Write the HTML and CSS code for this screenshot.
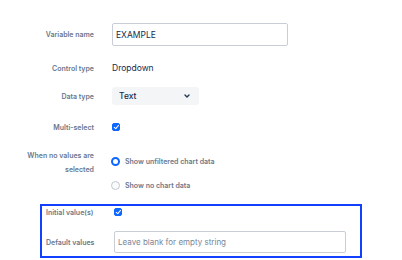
FILE: index.html
```html
<!DOCTYPE html>
<html lang="en">
<head>
  <meta charset="UTF-8">
  <meta name="viewport" content="width=device-width, initial-scale=1.0">
  <title>Variable settings</title>
  <link rel="stylesheet" href="styles.css">
</head>
<body>
  <form class="form">
    <div class="row row-name">
      <label class="label" for="name">Variable name</label>
      <input class="text-input name-input" id="name" type="text" value="EXAMPLE">
    </div>

    <div class="row row-control">
      <span class="label">Control type</span>
      <span class="value">Dropdown</span>
    </div>

    <div class="row row-data">
      <span class="label">Data type</span>
      <div class="select">
        <span>Text</span>
        <svg class="chevron" width="8" height="8" viewBox="0 0 8 8">
          <path d="M2 3 L4 5 L6 3" fill="none" stroke="#253858" stroke-width="1.4" stroke-linecap="round" stroke-linejoin="round"/>
        </svg>
      </div>
    </div>

    <div class="row row-multi">
      <span class="label">Multi-select</span>
      <span class="checkbox checked"></span>
    </div>

    <div class="row row-empty">
      <span class="label label-multi">When no values are<br>selected</span>
      <div class="radios">
        <div class="radio-item">
          <span class="radio selected"></span>
          <span class="radio-text">Show unfiltered chart data</span>
        </div>
        <div class="radio-item">
          <span class="radio"></span>
          <span class="radio-text">Show no chart data</span>
        </div>
      </div>
    </div>

    <div class="highlight">
      <div class="row row-initial">
        <span class="label">Initial value(s)</span>
        <span class="checkbox checked"></span>
      </div>
      <div class="row row-default">
        <span class="label">Default values</span>
        <input class="text-input default-input" type="text" placeholder="Leave blank for empty string">
      </div>
    </div>
  </form>
</body>
</html>
```

FILE: styles.css
```css
body {
  margin: 0;
  padding: 0;
  background: #fff;
  font-family: "Inter", "Liberation Sans", sans-serif;
  color: #172b4d;
}

.form {
  padding-top: 23px;
}

.row {
  display: flex;
  align-items: center;
}

.label {
  width: 80px;
  margin-left: 14px;
  margin-right: 18px;
  text-align: right;
  font-size: 7px;
  font-weight: 600;
  color: #6b778c;
  white-space: nowrap;
}

.row-name {
  height: 23px;
}

.text-input {
  box-sizing: border-box;
  border: 1.5px solid #c9ced6;
  border-radius: 2px;
  background: #fff;
  font-family: inherit;
  font-size: 8.5px;
  color: #172b4d;
  padding: 0 3px;
  outline: none;
}

.name-input {
  width: 176px;
  height: 23px;
}

.row-control {
  height: 22px;
  margin-top: 11px;
}

.value {
  font-size: 8.5px;
  color: #172b4d;
}

.row-data {
  height: 18px;
  margin-top: 8px;
}

.select {
  box-sizing: border-box;
  width: 87px;
  height: 18px;
  background: #f4f5f7;
  border-radius: 3px;
  display: flex;
  align-items: center;
  justify-content: space-between;
  padding: 0 8px 0 7px;
  font-size: 8.5px;
  font-weight: 500;
  color: #172b4d;
}

.row-multi {
  height: 20px;
  margin-top: 12px;
}

.checkbox {
  box-sizing: border-box;
  width: 8px;
  height: 8px;
  border-radius: 2px;
  border: 1.5px solid #dfe1e6;
  position: relative;
}

.checkbox.checked {
  background: #0c66ff;
  border-color: #0c66ff;
}

.checkbox.checked::after {
  content: "";
  position: absolute;
  left: 1.5px;
  top: 0;
  width: 2px;
  height: 3.5px;
  border: solid #fff;
  border-width: 0 1.3px 1.3px 0;
  transform: rotate(40deg);
}

.row-empty {
  align-items: flex-start;
  margin-top: 12px;
}

.label-multi {
  line-height: 14px;
}

.radios {
  display: flex;
  flex-direction: column;
  gap: 10px;
  padding-top: 5px;
}

.radio-item {
  display: flex;
  align-items: center;
  height: 14px;
}

.radio {
  box-sizing: border-box;
  width: 9px;
  height: 9px;
  border-radius: 50%;
  border: 1px solid #c1c7d0;
  background: #fafbfc;
  margin-right: 5px;
  margin-left: -1px;
}

.radio.selected {
  border: 2.5px solid #0c66ff;
  background: #fff;
}

.radio-text {
  font-size: 7px;
  font-weight: 600;
  color: #6b778c;
}

.highlight {
  margin: 12px 40px 0 40px;
  border: 2px solid #1240ff;
  padding: 0 0 3px 0;
}

.highlight .label {
  width: 52px;
  margin-left: 4px;
  margin-right: 16px;
  text-align: left;
}

.row-initial {
  height: 12px;
}

.row-default {
  margin-top: 13px;
  height: 22px;
}

.default-input {
  width: 232px;
  height: 22px;
  font-size: 8px;
}

.default-input::placeholder {
  color: #7a869a;
}
```
